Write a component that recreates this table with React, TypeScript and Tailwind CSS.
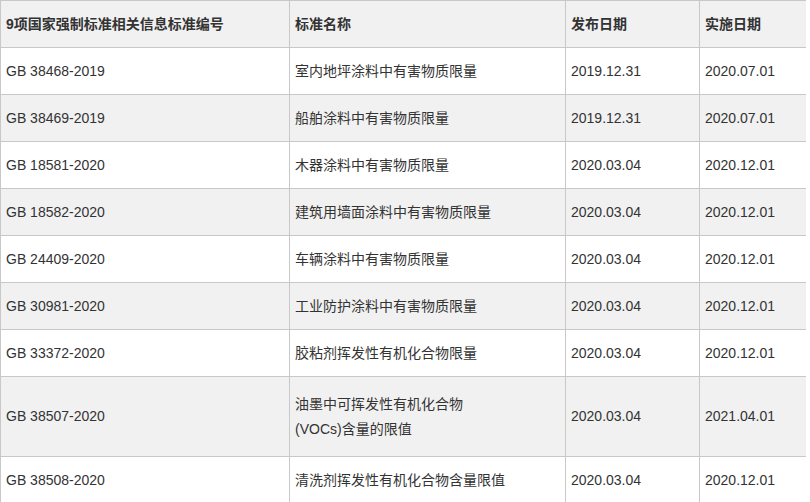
import React from "react";

type Row = { code: string; name: React.ReactNode; pub: string; eff: string; h: string };

const rows: Row[] = [
  { code: "GB 38468-2019", name: "室内地坪涂料中有害物质限量", pub: "2019.12.31", eff: "2020.07.01", h: "h-[47px]" },
  { code: "GB 38469-2019", name: "船舶涂料中有害物质限量", pub: "2019.12.31", eff: "2020.07.01", h: "h-[47px]" },
  { code: "GB 18581-2020", name: "木器涂料中有害物质限量", pub: "2020.03.04", eff: "2020.12.01", h: "h-[47px]" },
  { code: "GB 18582-2020", name: "建筑用墙面涂料中有害物质限量", pub: "2020.03.04", eff: "2020.12.01", h: "h-[47px]" },
  { code: "GB 24409-2020", name: "车辆涂料中有害物质限量", pub: "2020.03.04", eff: "2020.12.01", h: "h-[47px]" },
  { code: "GB 30981-2020", name: "工业防护涂料中有害物质限量", pub: "2020.03.04", eff: "2020.12.01", h: "h-[47px]" },
  { code: "GB 33372-2020", name: "胶粘剂挥发性有机化合物限量", pub: "2020.03.04", eff: "2020.12.01", h: "h-[47px]" },
  {
    code: "GB 38507-2020",
    name: (
      <>
        油墨中可挥发性有机化合物
        <br />
        (VOCs)含量的限值
      </>
    ),
    pub: "2020.03.04",
    eff: "2021.04.01",
    h: "h-[80px]",
  },
  { code: "GB 38508-2020", name: "清洗剂挥发性有机化合物含量限值", pub: "2020.03.04", eff: "2020.12.01", h: "h-[47px]" },
];

function Cell({ children, bold }: { children: React.ReactNode; bold?: boolean }) {
  return (
    <div
      className={
        "flex items-center border-l border-[#c8c8c8] pl-[5px] leading-[25px] " +
        (bold ? "font-bold" : "")
      }
    >
      <div>{children}</div>
    </div>
  );
}

export default function App() {
  return (
    <div
      className="w-[810px] h-[502px] overflow-hidden bg-white text-[14px] text-[#333333]"
      style={{ fontFamily: '"Liberation Sans", Arial, "Noto Sans CJK SC", sans-serif' }}
    >
      <div className="w-[806px]">
        <div className="grid grid-cols-[289px_276px_134px_107px] h-[47px] border-t border-[#c8c8c8] bg-[#f1f1f1]">
          <Cell bold>9项国家强制标准相关信息标准编号</Cell>
          <Cell bold>标准名称</Cell>
          <Cell bold>发布日期</Cell>
          <Cell bold>实施日期</Cell>
        </div>
        {rows.map((r, i) => (
          <div
            key={r.code}
            className={
              "grid grid-cols-[289px_276px_134px_107px] border-t border-[#c8c8c8] " +
              r.h +
              " " +
              (i % 2 === 1 ? "bg-[#f1f1f1]" : "bg-white")
            }
          >
            <Cell>{r.code}</Cell>
            <Cell>{r.name}</Cell>
            <Cell>{r.pub}</Cell>
            <Cell>{r.eff}</Cell>
          </div>
        ))}
      </div>
    </div>
  );
}
